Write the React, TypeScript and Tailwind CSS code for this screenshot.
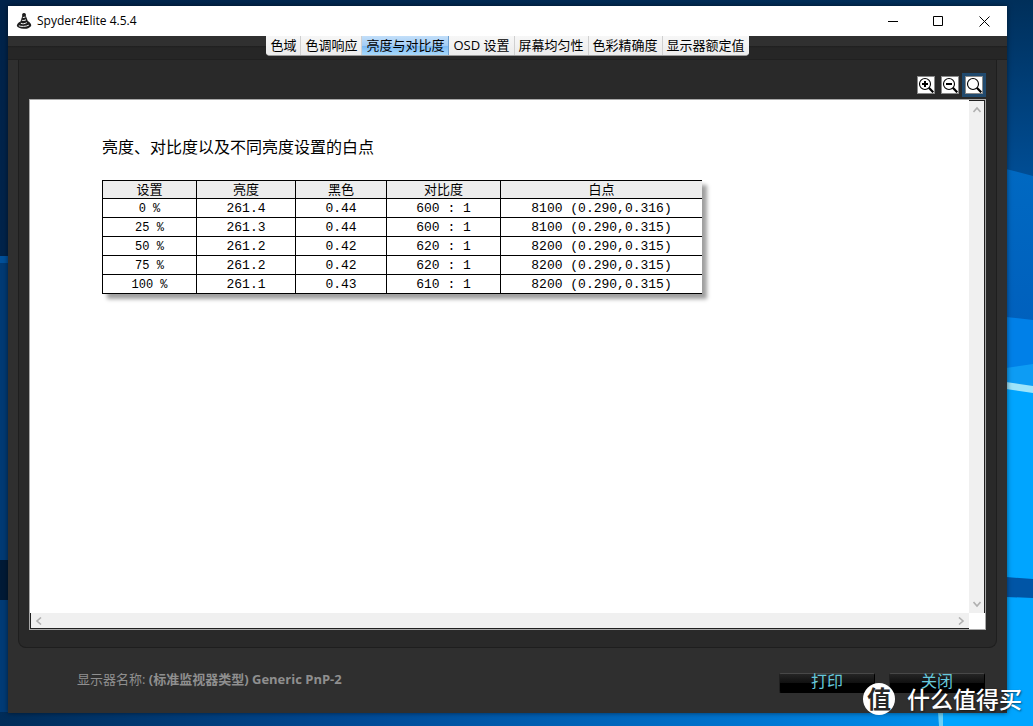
import React from "react";

const tabs = ["色域", "色调响应", "亮度与对比度", "OSD 设置", "屏幕均匀性", "色彩精确度", "显示器额定值"];

const columns = ["设置", "亮度", "黑色", "对比度", "白点"];

const rows = [
  ["0 %", "261.4", "0.44", "600 : 1", "8100 (0.290,0.316)"],
  ["25 %", "261.3", "0.44", "600 : 1", "8100 (0.290,0.315)"],
  ["50 %", "261.2", "0.42", "620 : 1", "8200 (0.290,0.315)"],
  ["75 %", "261.2", "0.42", "620 : 1", "8200 (0.290,0.315)"],
  ["100 %", "261.1", "0.43", "610 : 1", "8200 (0.290,0.315)"],
];

function Wallpaper() {
  return (
    <svg
      className="absolute inset-0 h-full w-full"
      viewBox="0 0 1033 726"
      preserveAspectRatio="none"
      aria-hidden="true"
    >
      <defs>
        <linearGradient id="top" x1="0" x2="1" y1="0" y2="0">
          <stop offset="0" stopColor="#00234a" />
          <stop offset="1" stopColor="#00305c" />
        </linearGradient>
        <linearGradient id="bottom" x1="0" x2="1" y1="0" y2="0">
          <stop offset="0" stopColor="#002c58" />
          <stop offset="0.35" stopColor="#004a96" />
          <stop offset="0.75" stopColor="#0078d4" />
          <stop offset="0.91" stopColor="#0090ec" />
        </linearGradient>
        <linearGradient id="sky" x1="0" x2="0" y1="0" y2="1">
          <stop offset="0" stopColor="#002f5a" />
          <stop offset="1" stopColor="#004e96" />
        </linearGradient>
        <linearGradient id="pane" x1="0" x2="0" y1="0" y2="1">
          <stop offset="0" stopColor="#0069c2" />
          <stop offset="1" stopColor="#0060bd" />
        </linearGradient>
      </defs>
      <rect width="1033" height="726" fill="url(#top)" />
      <rect y="256" width="9" height="304" fill="#003a74" />
      <rect y="256" width="9" height="7" fill="#00509a" />
      <rect y="560" width="9" height="40" fill="#001a36" />
      <rect y="600" width="9" height="126" fill="#003b76" />
      <rect y="712" width="1033" height="14" fill="url(#bottom)" />
      <rect x="1006" width="27" height="180" fill="url(#sky)" />
      <path d="M1006 169L1033 176V325H1006Z" fill="url(#pane)" />
      <path d="M1006 317L1033 320V370H1006Z" fill="#0080e8" />
      <path d="M1006 368L1033 364V390H1006Z" fill="#0d9cf4" />
      <path d="M1006 386H1033V726H1006Z" fill="#00a5ff" />
      <path d="M1006 382L1033 386V393L1006 389Z" fill="#9fe4fa" />
      <path d="M1006 577L1033 579V598L1006 597Z" fill="#0055a6" />
      <path d="M940 712H1033V726H940Z" fill="#00a5ff" />
      <path d="M938 712H943V726H939Z" fill="#6cd0f5" />
    </svg>
  );
}

function AppLogo() {
  return (
    <svg className="size-4" viewBox="0 0 16 16" aria-hidden="true">
      <path d="M8 0C9.800 0 10.300 1.500 9.800 2.800L11.800 8C14 9 15.500 11 15.200 13C13 15.700 10 16 7.500 15.700C4 15.600 1.500 14.500.8 12.800C1 11 2.500 9.500 4.500 8.500L6.300 3C5.700 1.500 6.300 0 8 0Z" fill="#1d1d1d" />
      <path d="M6.800 4.600L9.400 4M5.800 7.200C7 7.800 8.800 7.400 10 6.800M4.800 10.200C6.500 11.200 9 10.800 10.800 9.600M2.800 12.800C5 13.800 10 13.600 12.800 12.200" fill="none" stroke="#f4f4f4" strokeWidth="1" />
    </svg>
  );
}

function Magnifier({ sign }: { sign?: "plus" | "minus" }) {
  return (
    <svg className="size-4" viewBox="0 0 16 16" aria-hidden="true">
      <circle cx="7" cy="7" r="5.500" fill="#fff" stroke="#000" strokeWidth="1.100" />
      <path d="M10.800 10.800L15.300 15.300" stroke="#000" strokeWidth="2.200" />
      {sign && <path d="M4 7H10" stroke="#000" strokeWidth="2" />}
      {sign === "plus" && <path d="M7 4V10" stroke="#000" strokeWidth="2" />}
    </svg>
  );
}

function Chevron({ d }: { d: string }) {
  return (
    <svg className="size-2" viewBox="0 0 8 8" aria-hidden="true">
      <path d={d} fill="none" stroke="#b0b0b0" strokeWidth="1.600" />
    </svg>
  );
}

function TitleBar() {
  return (
    <header className="flex h-[30px] shrink-0 items-center bg-white pl-2">
      <AppLogo />
      <h1 className="ml-[5px] flex-1 text-[12px] leading-4 text-black">Spyder4Elite 4.5.4</h1>
      <button type="button" aria-label="最小化" className="flex h-full w-[46px] items-center justify-center">
        <svg className="size-[11px]" viewBox="0 0 11 11"><path d="M1 5.500H11" stroke="#000" /></svg>
      </button>
      <button type="button" aria-label="最大化" className="flex h-full w-[46px] items-center justify-center">
        <svg className="size-[11px]" viewBox="0 0 11 11"><path d="M.5.5H9.500V9.500H.5Z" fill="none" stroke="#000" /></svg>
      </button>
      <button type="button" aria-label="关闭窗口" className="flex h-full w-[46px] items-center justify-center">
        <svg className="size-[11px]" viewBox="0 0 11 11"><path d="M.5.5L10.500 10.500M10.500.5L.5 10.500" stroke="#000" /></svg>
      </button>
    </header>
  );
}

function TabBar() {
  return (
    <div className="flex h-6 shrink-0 items-start justify-center bg-[linear-gradient(to_bottom,#303030_0,#303030_10px,#1f1f1f_10px,#262626_12px,#262626_23px,#202020_23px)]">
      <nav className="flex h-5 overflow-hidden rounded-b-sm border-b border-[#9a9a9a] bg-[#f0f0f0]">
        {tabs.map((tab, i) => (
          <button
            key={tab}
            type="button"
            className={
              i === 2
                ? "border-r border-[#6d9fd0] bg-[linear-gradient(to_bottom,#c3dff9_0,#a3cdf6_50%,#79b7f3_50%,#a9dafb_100%)] px-1 pb-[2px] text-[13px] leading-4 whitespace-nowrap text-black"
                : "border-r border-[#d0d0d0] bg-[linear-gradient(to_bottom,#f7f7f7,#ececec)] px-1 pb-[2px] text-[13px] leading-4 whitespace-nowrap text-black last:border-r-0"
            }
          >
            {tab}
          </button>
        ))}
      </nav>
    </div>
  );
}

function ZoomTools() {
  const base = "flex size-[18px] items-center justify-center border border-[#8a8a8a] bg-white";
  return (
    <div className="flex h-[39px] shrink-0 items-center justify-end gap-[6px] pt-[11px] pr-[3px]">
      <button type="button" aria-label="放大" className={base}><Magnifier sign="plus" /></button>
      <button type="button" aria-label="缩小" className={base}><Magnifier sign="minus" /></button>
      <button type="button" aria-label="实际大小" className="flex size-[18px] items-center justify-center border border-[#8a8a8a] bg-white ring-3 ring-[#214a6e]">
        <Magnifier />
      </button>
    </div>
  );
}

function ReportTable() {
  return (
    <table className="w-[600px] table-fixed border-separate border-spacing-0 border-t border-l border-black bg-white text-center text-black shadow-[5px_5px_4px_#a0a0a0]">
      <colgroup>
        <col className="w-[94px]" />
        <col className="w-[99px]" />
        <col className="w-[91px]" />
        <col className="w-[114px]" />
        <col />
      </colgroup>
      <thead>
        <tr>
          {columns.map((c) => (
            <th key={c} scope="col" className="h-[18px] border-r border-b border-black bg-[#ededed] p-0 text-[13px] leading-[17px] font-normal last:border-r-0">
              {c}
            </th>
          ))}
        </tr>
      </thead>
      <tbody className="font-['Liberation_Mono',monospace]">
        {rows.map((r) => (
          <tr key={r[0]}>
            {r.map((cell, i) => (
              <td
                key={columns[i]}
                className="h-[19px] border-r border-b border-black p-0 pt-[2px] text-[13px] leading-4 first:text-[12px] last:border-r-0"
              >
                {cell}
              </td>
            ))}
          </tr>
        ))}
      </tbody>
    </table>
  );
}

function DocumentView() {
  return (
    <div className="grid flex-1 grid-cols-[1fr_16px] grid-rows-[1fr_16px] border border-[#a8a8a8] bg-white">
      <div className="pt-[35px] pb-8 pl-[72px]">
        <h2 className="text-[16px] leading-6 text-black">亮度、对比度以及不同亮度设置的白点</h2>
        <div className="mt-[21px]">
          <ReportTable />
        </div>
      </div>
      <div className="flex flex-col items-center justify-between border-t border-r border-[#202020] bg-[#f0f0f0] py-[5px]">
        <button type="button" aria-label="向上滚动"><Chevron d="M.5 6L4 2L7.500 6" /></button>
        <button type="button" aria-label="向下滚动"><Chevron d="M.5 2L4 6L7.500 2" /></button>
      </div>
      <div className="flex items-center justify-between border-b border-l border-[#202020] bg-[#f0f0f0] px-[4px]">
        <button type="button" aria-label="向左滚动"><Chevron d="M6 .5L2 4L6 7.500" /></button>
        <button type="button" aria-label="向右滚动"><Chevron d="M2 .5L6 4L2 7.500" /></button>
      </div>
      <div className="bg-white" />
    </div>
  );
}

function FooterButton({ children }: { children: React.ReactNode }) {
  return (
    <button
      type="button"
      className="mt-1 flex h-5 w-24 items-center justify-center rounded-[2px] border border-t-[#484848] border-r-black border-b-black border-l-[#202020] bg-[linear-gradient(to_bottom,#252525_0,#101010_50%,#000_50%,#000_100%)] pb-1 text-[16px] leading-4 text-[#66c8dc]"
    >
      {children}
    </button>
  );
}

function Watermark() {
  return (
    <div className="absolute right-[11px] bottom-[11px] flex items-center gap-3 text-white">
      <span className="flex size-8 items-center justify-center rounded-full bg-white text-[24px] leading-8 font-bold text-[#282828]">
        值
      </span>
      <span className="text-[23px] leading-8 font-medium [text-shadow:1px_1px_2px_#0008]">什么值得买</span>
    </div>
  );
}

export default function App() {
  return (
    <div className="relative flex min-h-screen flex-col pt-[6px] pr-[26px] pb-[13px] pl-2 font-['Open_Sans','Noto_Sans_CJK_SC',sans-serif]">
      <Wallpaper />
      <main className="relative flex flex-1 flex-col bg-[#2f2f2f] shadow-[0_0_5px_#0008]">
        <TitleBar />
        <TabBar />
        <section className="mx-[10px] flex flex-1 flex-col rounded-b-lg border border-t-0 border-[#1e1e1e] bg-[#292929] px-[10px] pb-[17px]">
          <ZoomTools />
          <DocumentView />
        </section>
        <footer className="flex h-[65px] shrink-0 items-start gap-[14px] pt-[21px] pr-[22px] pl-[69px]">
          <p className="flex-1 text-[13px] leading-5 text-[#8f8f8f]">
            显示器名称: <strong className="font-bold">(标准监视器类型) Generic PnP-2</strong>
          </p>
          <FooterButton>打印</FooterButton>
          <FooterButton>关闭</FooterButton>
        </footer>
      </main>
      <Watermark />
    </div>
  );
}
